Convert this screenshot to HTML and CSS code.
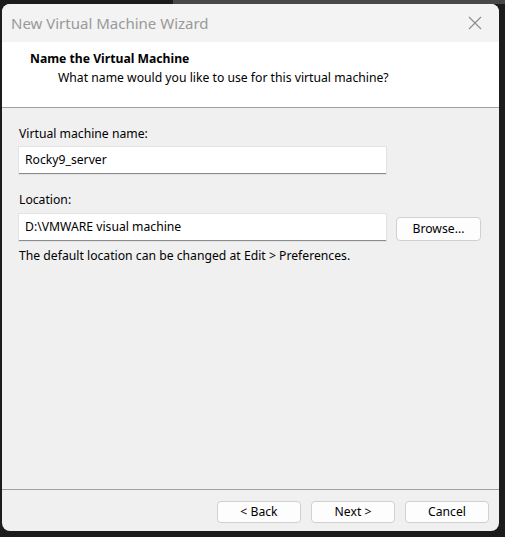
FILE: index.html
```html
<!DOCTYPE html>
<html>
<head>
<meta charset="utf-8">
<link rel="stylesheet" href="styles.css">
</head>
<body>
<div class="window">
  <div class="titlebar">
    <span class="title">New Virtual Machine Wizard</span>
    <svg class="close" width="14" height="14" viewBox="0 0 14 14"><path d="M1 1L13 13M13 1L1 13" stroke="#8a8a8a" stroke-width="1.1" fill="none"/></svg>
  </div>
  <div class="header">
    <div class="h-title">Name the Virtual Machine</div>
    <div class="h-sub">What name would you like to use for this virtual machine?</div>
  </div>
  <div class="content">
    <div class="label first">Virtual machine name:</div>
    <div class="field">Rocky9_server</div>
    <div class="label second">Location:</div>
    <div class="row">
      <div class="field">D:\VMWARE visual machine</div>
      <div class="btn browse">Browse...</div>
    </div>
    <div class="note">The default location can be changed at Edit &gt; Preferences.</div>
  </div>
  <div class="footer">
    <div class="btn">&lt; Back</div>
    <div class="btn">Next &gt;</div>
    <div class="btn">Cancel</div>
  </div>
</div>
</body>
</html>
```
FILE: styles.css
```css
html, body { margin: 0; padding: 0; }
body {
  width: 505px;
  height: 537px;
  overflow: hidden;
  background: linear-gradient(to right, #1c1c1c 173px, #484848 173px) top left / 100% 4px no-repeat, #1c1c1c;
  font-family: "Noto Sans", "Segoe UI", sans-serif;
  font-size: 12.2px;
  color: #000;
}
.window {
  margin: 4px 0 0 2px;
  width: 497px;
  height: 527px;
  background: #f0f0f0;
  border-radius: 8px;
  overflow: hidden;
  display: flex;
  flex-direction: column;
}
.titlebar {
  height: 38px;
  background: #f3f3f3;
  display: flex;
  align-items: center;
  justify-content: space-between;
  padding: 0 17px 0 9px;
  flex: none;
}
.title {
  color: #999;
  font-size: 15px;
  margin-top: -1px;
}
.close { margin-top: -1px; }
.header {
  background: #fff;
  height: 66px;
  border-bottom: 1px solid #a0a0a0;
  flex: none;
  padding-left: 28px;
  box-sizing: border-box;
  padding-top: 9px;
}
.h-title { font-weight: bold; line-height: 16px; }
.h-sub { padding-left: 28px; line-height: 16px; margin-top: 3px; }
.content {
  flex: 1;
  padding: 18px 0 0 17px;
  border-bottom: 1px solid #a0a0a0;
}
.label { line-height: 16px; }
.field {
  width: 367px;
  height: 27px;
  box-sizing: border-box;
  background: #fff;
  border-bottom: 1px solid #8a8a8a;
  box-shadow: 0 0 0 1px #e3e3e3;
  padding: 0 6px;
  line-height: 25px;
  margin-top: 5px;
}
.label.second { margin-top: 18px; }
.row { display: flex; align-items: center; gap: 10px; margin-top: 6px; }
.row .field { margin-top: 0; }
.btn {
  width: 84px;
  height: 24px;
  box-sizing: border-box;
  background: #fdfdfd;
  border: 1px solid #d0d0d0;
  border-radius: 4px;
  text-align: center;
  line-height: 21px;
}
.browse { width: 85px; margin-top: 2px; }
.note { margin-top: 7px; line-height: 16px; }
.footer {
  height: 41px;
  flex: none;
  display: flex;
  justify-content: flex-end;
  gap: 10px;
  padding: 11px 10px 0 0;
  box-sizing: border-box;
  align-items: flex-start;
}
.footer .btn { height: 22px; line-height: 19px; }
```
